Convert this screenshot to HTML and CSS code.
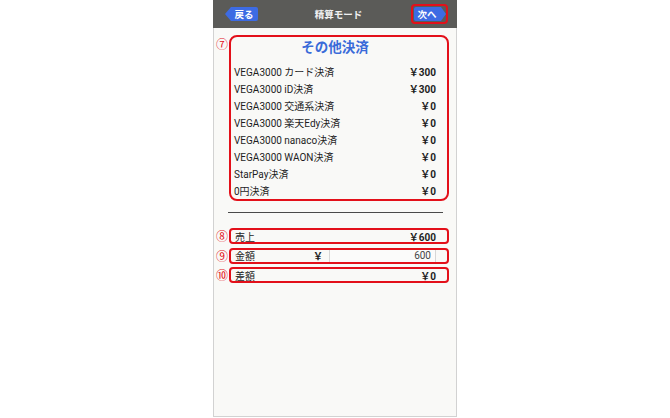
FILE: index.html
```html
<!DOCTYPE html>
<html lang="ja">
<head>
<meta charset="utf-8">
<title>精算モード</title>
<link rel="stylesheet" href="styles.css">
</head>
<body>
<div class="phone">
  <header class="topbar">
    <span class="btn btn-back">戻る</span>
    <span class="title">精算モード</span>
    <span class="btn-outline"><span class="btn btn-next">次へ</span></span>
  </header>
  <main class="content">
    <div class="marked">
      <span class="num">⑦</span>
      <section class="box section">
        <h2 class="sec-title">その他決済</h2>
        <div class="row"><span>VEGA3000 カード決済</span><b>￥300</b></div>
        <div class="row"><span>VEGA3000 iD決済</span><b>￥300</b></div>
        <div class="row"><span>VEGA3000 交通系決済</span><b>￥0</b></div>
        <div class="row"><span>VEGA3000 楽天Edy決済</span><b>￥0</b></div>
        <div class="row"><span>VEGA3000 nanaco決済</span><b>￥0</b></div>
        <div class="row"><span>VEGA3000 WAON決済</span><b>￥0</b></div>
        <div class="row"><span>StarPay決済</span><b>￥0</b></div>
        <div class="row"><span>0円決済</span><b>￥0</b></div>
      </section>
    </div>
    <hr class="divider">
    <div class="marked small">
      <span class="num">⑧</span>
      <div class="box line"><span>売上</span><b>￥600</b></div>
    </div>
    <div class="marked small">
      <span class="num">⑨</span>
      <div class="box line"><span>金額</span><b class="yen">￥</b><span class="input">600</span></div>
    </div>
    <div class="marked small">
      <span class="num">⑩</span>
      <div class="box line"><span>差額</span><b>￥0</b></div>
    </div>
  </main>
</div>
</body>
</html>
```

FILE: styles.css
```css
* { box-sizing: border-box; }
html, body { margin: 0; padding: 0; background: #ffffff; }
body {
  font-family: Roboto, "Noto Sans CJK JP", sans-serif;
  color: #1e1e1e;
}
.phone {
  width: 244px;
  height: 417px;
  margin: 0 auto;
  border: 1px solid #d2d2d2;
  border-top: none;
  background: #f9f9f7;
  display: flex;
  flex-direction: column;
}
.topbar {
  height: 28px;
  margin: 0 -1px;
  background: #5b5b58;
  display: flex;
  align-items: center;
  justify-content: space-between;
  padding: 0 9px 0 12px;
}
.btn {
  display: flex;
  align-items: center;
  justify-content: center;
  height: 14px;
  background: #3d6be3;
  color: #fff;
  font-family: "Noto Sans CJK JP", sans-serif;
  font-weight: 700;
  font-size: 9.5px;
}
.btn-back {
  width: 33px;
  padding-left: 5px;
  clip-path: polygon(6px 0, 100% 0, 100% 100%, 6px 100%, 0 50%);
  border-radius: 0 2px 2px 0;
}
.btn-outline {
  display: flex;
  align-items: center;
  padding: 1px 0 1px 1px;
  border: 2px solid #e3101a;
  border-radius: 4px;
  height: 20px;
  width: 37px;
}
.btn-next {
  width: 33px;
  padding-right: 6px;
  clip-path: polygon(0 0, calc(100% - 5px) 0, 100% 50%, calc(100% - 5px) 100%, 0 100%);
  border-radius: 2px 0 0 2px;
}
.title {
  color: #f0f0f0;
  font-family: "Noto Sans CJK JP", sans-serif;
  font-weight: 700;
  font-size: 9.5px;
  margin-left: 8px;
}
.content {
  padding: 7px 7px 0 2px;
  display: flex;
  flex-direction: column;
}
.marked {
  display: flex;
  align-items: flex-start;
}
.marked.small { align-items: center; margin-bottom: 3.5px; }
.num {
  width: 13px;
  flex: none;
  color: #e3101a;
  font-family: "Noto Sans CJK JP", sans-serif;
  font-size: 12px;
  line-height: 12px;
  text-align: center;
  padding-right: 1px;
  margin-top: 3px;
}
.marked.small .num { margin-top: 0; }
.box {
  flex: 1;
  border: 2px solid #e3101a;
  border-radius: 4px;
}
.section {
  border-radius: 8px;
  padding: 0 11px 0 3px;
}
.sec-title {
  margin: 0 0 8px;
  height: 18px;
  line-height: 18px;
  text-align: center;
  color: #3a6bd9;
  font-family: "Noto Sans CJK JP", sans-serif;
  font-size: 13.5px;
  font-weight: 700;
}
.row {
  display: flex;
  justify-content: space-between;
  align-items: center;
  height: 17px;
  font-size: 10px;
  font-family: Roboto, "Noto Sans CJK JP", sans-serif;
}
.row b, .line b { font-weight: 700; }
.divider {
  margin: 11px 6px 15px 12px;
  border: 0;
  border-top: 1px solid #4a4a4a;
  height: 0;
}
.line {
  height: 16px;
  display: flex;
  align-items: center;
  padding: 0 11px 0 4px;
  font-size: 10px;
  font-family: Roboto, "Noto Sans CJK JP", sans-serif;
}
.line span:first-child { flex: 1; }
.line .yen { margin-right: 6px; }
.input {
  width: 107px;
  height: 12px;
  border-left: 1px solid #d6d6d6;
  border-right: 1px solid #d6d6d6;
  background: #fbfbfa;
  color: #444;
  text-align: right;
  padding-right: 4px;
  line-height: 12px;
}
```
